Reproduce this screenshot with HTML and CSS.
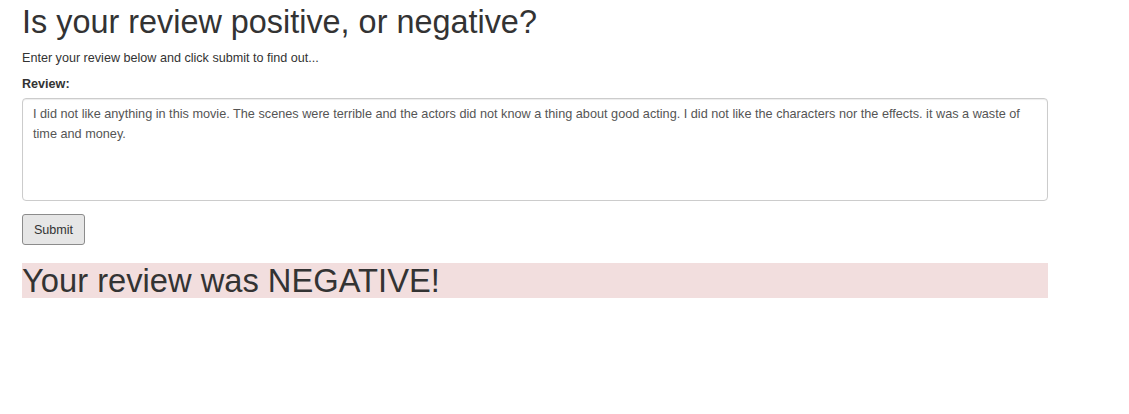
FILE: index.html
```html
<!DOCTYPE html>
<html>
<head>
<meta charset="utf-8">
<link rel="stylesheet" href="styles.css">
</head>
<body>
<div class="container">
  <h1 class="title">Is your review positive, or negative?</h1>
  <p class="lead">Enter your review below and click submit to find out...</p>
  <form class="form">
    <label class="label" for="review">Review:</label>
    <textarea id="review" class="review">I did not like anything in this movie. The scenes were terrible and the actors did not know a thing about good acting. I did not like the characters nor the effects. it was a waste of time and money.</textarea>
    <button type="button" class="btn">Submit</button>
  </form>
  <div class="result">Your review was NEGATIVE!</div>
</div>
</body>
</html>
```

FILE: styles.css
```css
html, body {
  margin: 0;
  padding: 0;
  background: #fff;
}
body {
  font-family: "Liberation Sans", Arial, sans-serif;
  font-size: 12.6px;
  color: #333;
  line-height: 17px;
}
.container {
  width: 1026px;
  padding: 0 22px;
  display: flex;
  flex-direction: column;
}
.title {
  font-size: 32.4px;
  font-weight: 400;
  line-height: 35px;
  margin: 5px 0 0 0;
}
.lead {
  margin: 10px 0 0 0;
}
.form {
  display: flex;
  flex-direction: column;
  align-items: flex-start;
  margin-top: 9px;
}
.label {
  font-weight: 700;
  margin-bottom: 5px;
}
.review {
  box-sizing: border-box;
  width: 1026px;
  height: 103px;
  padding: 5px 10px;
  border: 1px solid #ccc;
  border-radius: 4px;
  box-shadow: inset 0 1px 1px rgba(0,0,0,0.075);
  font-family: "Liberation Sans", Arial, sans-serif;
  font-size: 12.7px;
  line-height: 20px;
  color: #555;
  resize: none;
  margin: 0;
}
.btn {
  margin-top: 13px;
  box-sizing: border-box;
  width: 63px;
  height: 31px;
  background: #e6e6e6;
  border: 1px solid #8c8c8c;
  border-radius: 3px;
  font-family: "Liberation Sans", Arial, sans-serif;
  font-size: 12.6px;
  color: #333;
  padding: 0;
}
.result {
  margin-top: 18px;
  background: #f2dede;
  font-size: 32.7px;
  line-height: 35px;
  color: #333;
}
```
